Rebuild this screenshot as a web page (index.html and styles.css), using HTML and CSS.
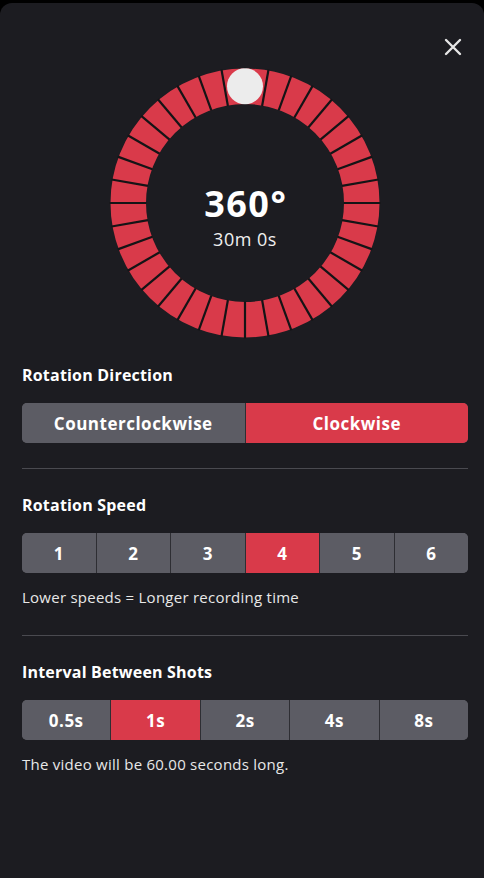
FILE: index.html
```html
<!DOCTYPE html>
<html lang="en">
<head>
<meta charset="utf-8">
<title>Rotation settings</title>
<link rel="stylesheet" href="styles.css">
</head>
<body>
<div class="strip"></div>
<main class="sheet">
  <header class="sheet-head">
    <button class="close" aria-label="Close">
      <svg viewBox="0 0 24 24" width="24" height="24"><path d="M5 5 L19 19 M19 5 L5 19" stroke="#e6e6e6" stroke-width="2.4" stroke-linecap="round" fill="none"/></svg>
    </button>
  </header>

  <section class="dial">
    <svg class="ring" viewBox="0 0 280 280" width="280" height="280">
      <defs>
        <line id="tick" x1="140" y1="4.5" x2="140" y2="41.5" stroke="#141416" stroke-width="2.2"/>
      </defs>
      <circle cx="140" cy="140" r="116.75" fill="none" stroke="#d93a4a" stroke-width="35.5"/>
      <use href="#tick"/>
      <use href="#tick" transform="rotate(10 140 140)"/>
      <use href="#tick" transform="rotate(20 140 140)"/>
      <use href="#tick" transform="rotate(30 140 140)"/>
      <use href="#tick" transform="rotate(40 140 140)"/>
      <use href="#tick" transform="rotate(50 140 140)"/>
      <use href="#tick" transform="rotate(60 140 140)"/>
      <use href="#tick" transform="rotate(70 140 140)"/>
      <use href="#tick" transform="rotate(80 140 140)"/>
      <use href="#tick" transform="rotate(90 140 140)"/>
      <use href="#tick" transform="rotate(100 140 140)"/>
      <use href="#tick" transform="rotate(110 140 140)"/>
      <use href="#tick" transform="rotate(120 140 140)"/>
      <use href="#tick" transform="rotate(130 140 140)"/>
      <use href="#tick" transform="rotate(140 140 140)"/>
      <use href="#tick" transform="rotate(150 140 140)"/>
      <use href="#tick" transform="rotate(160 140 140)"/>
      <use href="#tick" transform="rotate(170 140 140)"/>
      <use href="#tick" transform="rotate(180 140 140)"/>
      <use href="#tick" transform="rotate(190 140 140)"/>
      <use href="#tick" transform="rotate(200 140 140)"/>
      <use href="#tick" transform="rotate(210 140 140)"/>
      <use href="#tick" transform="rotate(220 140 140)"/>
      <use href="#tick" transform="rotate(230 140 140)"/>
      <use href="#tick" transform="rotate(240 140 140)"/>
      <use href="#tick" transform="rotate(250 140 140)"/>
      <use href="#tick" transform="rotate(260 140 140)"/>
      <use href="#tick" transform="rotate(270 140 140)"/>
      <use href="#tick" transform="rotate(280 140 140)"/>
      <use href="#tick" transform="rotate(290 140 140)"/>
      <use href="#tick" transform="rotate(300 140 140)"/>
      <use href="#tick" transform="rotate(310 140 140)"/>
      <use href="#tick" transform="rotate(320 140 140)"/>
      <use href="#tick" transform="rotate(330 140 140)"/>
      <use href="#tick" transform="rotate(340 140 140)"/>
      <use href="#tick" transform="rotate(350 140 140)"/>
      <circle cx="140" cy="23.25" r="18" fill="#ececec"/>
    </svg>
    <div class="dial-text">
      <div class="deg">360°</div>
      <div class="time">30m 0s</div>
    </div>
  </section>

  <section class="group group-first">
    <h2 class="label">Rotation Direction</h2>
    <div class="seg">
      <button class="opt">Counterclockwise</button>
      <button class="opt on">Clockwise</button>
    </div>
  </section>

  <hr class="divider">

  <section class="group">
    <h2 class="label">Rotation Speed</h2>
    <div class="seg">
      <button class="opt">1</button>
      <button class="opt">2</button>
      <button class="opt">3</button>
      <button class="opt on">4</button>
      <button class="opt">5</button>
      <button class="opt">6</button>
    </div>
    <p class="note">Lower speeds = Longer recording time</p>
  </section>

  <hr class="divider divider-low">

  <section class="group">
    <h2 class="label">Interval Between Shots</h2>
    <div class="seg">
      <button class="opt">0.5s</button>
      <button class="opt on">1s</button>
      <button class="opt">2s</button>
      <button class="opt">4s</button>
      <button class="opt">8s</button>
    </div>
    <p class="note">The video will be 60.00 seconds long.</p>
  </section>
</main>
</body>
</html>
```

FILE: styles.css
```css
* { box-sizing: border-box; }
html, body { margin: 0; padding: 0; }
body {
  background: #000;
  font-family: "Open Sans", "DejaVu Sans", sans-serif;
  color: #fff;
  width: 484px;
  height: 878px;
  overflow: hidden;
}
.strip { height: 3px; background: #000; }
.sheet {
  background: #1c1c21;
  border-radius: 12px 12px 0 0;
  height: 875px;
  padding: 0 16px 0 22px;
}
.sheet-head {
  height: 60px;
  display: flex;
  justify-content: flex-end;
  align-items: flex-start;
}
.close {
  margin-top: 32px;
  margin-right: 3px;
  width: 24px;
  height: 24px;
  padding: 0;
  border: 0;
  background: none;
  display: flex;
}
.dial {
  position: relative;
  height: 280px;
  display: flex;
  justify-content: center;
}
.ring { display: block; }
.dial-text {
  position: absolute;
  left: 0; right: 0; top: 0; bottom: 0;
  display: flex;
  flex-direction: column;
  align-items: center;
  padding-top: 121px;
}
.deg {
  font-size: 36px;
  font-weight: 700;
  line-height: 40px;
  letter-spacing: 1.5px;
  padding-left: 1.5px;
}
.time {
  margin-top: 4px;
  font-size: 18px;
  line-height: 22px;
  letter-spacing: 0.5px;
  color: #f0f0f0;
}
.group-first { margin-top: 22px; }
.label {
  margin: 0;
  font-size: 16px;
  font-weight: 700;
  line-height: 20px;
  letter-spacing: 0.2px;
}
.seg {
  margin-top: 18px;
  display: flex;
  height: 40px;
  border-radius: 5px;
  overflow: hidden;
  background: #5c5c64;
}
.opt {
  flex: 1;
  border: 0;
  margin: 0;
  padding: 0;
  background: #5c5c64;
  color: #fff;
  font-family: inherit;
  font-size: 17px;
  font-weight: 700;
  letter-spacing: 0.5px;
  border-left: 1px solid #2e2e33;
}
.opt:first-child { border-left: 0; }
.opt.on { background: #d93a4a; }
.note {
  margin: 14px 0 0;
  font-size: 15px;
  line-height: 20px;
  letter-spacing: 0.25px;
  color: #e8e8e8;
}
.divider {
  border: 0;
  height: 1px;
  background: #4a4a50;
  margin: 25px 0 26px;
}
.divider-low { margin-top: 28px; }
```
